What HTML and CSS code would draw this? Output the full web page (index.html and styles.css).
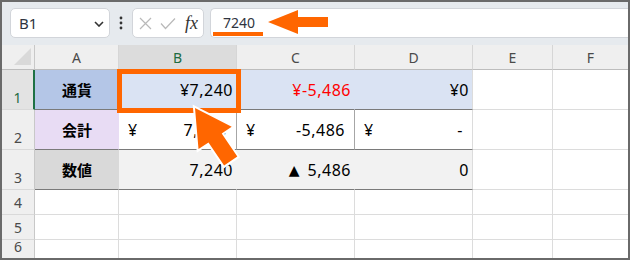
FILE: index.html
```html
<!DOCTYPE html>
<html lang="ja">
<head>
<meta charset="utf-8">
<link rel="stylesheet" href="styles.css">
</head>
<body>
<div class="frame">
  <div class="toolbar">
    <div class="namebox">
      <span class="nb-text">B1</span>
      <svg class="chev" width="10" height="6" viewBox="0 0 10 6"><polyline points="1,1 5,5 9,1" fill="none" stroke="#333" stroke-width="1.6"/></svg>
    </div>
    <div class="dots">
      <svg width="4" height="14" viewBox="0 0 4 14"><circle cx="2" cy="2" r="1.4" fill="#333"/><circle cx="2" cy="7" r="1.4" fill="#333"/><circle cx="2" cy="12" r="1.4" fill="#333"/></svg>
    </div>
    <div class="fxbox">
      <svg class="ico" width="13" height="13" viewBox="0 0 13 13"><path d="M1 1 L12 12 M12 1 L1 12" stroke="#b9b9b9" stroke-width="1.2" fill="none"/></svg>
      <svg class="ico" width="16" height="13" viewBox="0 0 16 13"><polyline points="1,6.5 5.5,11.5 15,1.5" stroke="#b9b9b9" stroke-width="1.2" fill="none"/></svg>
      <span class="fx">fx</span>
    </div>
    <div class="formula"><span class="ftext">7240</span></div>
  </div>

  <div class="sheet">
    <div class="corner"><svg width="18" height="18" viewBox="0 0 18 18"><polygon points="17,0 17,17 0,17" fill="#d9d9d9"/></svg></div>
    <div class="ch">A</div>
    <div class="ch sel">B</div>
    <div class="ch">C</div>
    <div class="ch">D</div>
    <div class="ch">E</div>
    <div class="ch last">F</div>

    <div class="rh sel">1</div>
    <div class="c lbl hd1">通貨</div>
    <div class="c num r1">¥7,240</div>
    <div class="c num r1 red">¥-5,486</div>
    <div class="c num r1 end">¥0</div>
    <div class="c"></div>
    <div class="c last"></div>

    <div class="rh">2</div>
    <div class="c lbl hd2">会計</div>
    <div class="c acct r2"><span>¥</span><span>7,240</span></div>
    <div class="c acct r2"><span>¥</span><span>-5,486</span></div>
    <div class="c acct r2 end"><span>¥</span><span>-</span></div>
    <div class="c"></div>
    <div class="c last"></div>

    <div class="rh">3</div>
    <div class="c lbl hd3">数値</div>
    <div class="c num r3">7,240</div>
    <div class="c num r3"><span class="tri">▲</span>&nbsp;5,486</div>
    <div class="c num r3 end">0</div>
    <div class="c"></div>
    <div class="c last"></div>

    <div class="rh">4</div>
    <div class="c"></div><div class="c"></div><div class="c"></div><div class="c"></div><div class="c"></div><div class="c last"></div>
    <div class="rh">5</div>
    <div class="c"></div><div class="c"></div><div class="c"></div><div class="c"></div><div class="c"></div><div class="c last"></div>
    <div class="rh bottom">6</div>
    <div class="c bottom"></div><div class="c bottom"></div><div class="c bottom"></div><div class="c bottom"></div><div class="c bottom"></div><div class="c bottom last"></div>
  </div>

  <svg class="overlay" width="630" height="260" viewBox="0 0 630 260">
    <rect x="213" y="32" width="50" height="4" fill="#ff6600"/>
    <polygon points="268,22 298,10 298,17 328,17 328,27 298,27 298,34" fill="#ff6600"/>
    <rect x="119.5" y="71.5" width="119" height="39" fill="none" stroke="#ff6600" stroke-width="5"/>
    <polygon points="195,108 231.7,126.7 221.7,133.4 237.3,156.6 224.1,165.6 208.5,142.4 198.5,149.1" fill="#ff6600" stroke="#ffffff" stroke-width="4" stroke-linejoin="miter" paint-order="stroke"/>
  </svg>
</div>
</body>
</html>
```

FILE: styles.css
```css
* { box-sizing: border-box; }
html, body { margin: 0; padding: 0; background: #ffffff; }

.frame {
  position: relative;
  width: 630px;
  height: 260px;
  border: 2px solid #6a6a6a;
  overflow: hidden;
  font-family: "Noto Sans CJK JP", "Noto Sans", sans-serif;
}

.toolbar {
  height: 43px;
  background: #e6eaee;
  display: flex;
  align-items: flex-start;
  padding: 6px 0 0 8px;
}

.namebox {
  width: 100px;
  height: 30px;
  background: #fff;
  border: 1px solid #d2d5da;
  border-radius: 5px;
  display: flex;
  align-items: center;
  justify-content: space-between;
  padding: 0 5px 0 8px;
}
.nb-text {
  font-family: "Noto Sans", sans-serif;
  font-size: 15px;
  color: #2f3440;
}
.chev { margin-top: 1px; }

.dots {
  width: 22px;
  height: 30px;
  display: flex;
  align-items: center;
  justify-content: center;
}

.fxbox {
  width: 72px;
  height: 30px;
  background: #fff;
  border: 1px solid #d2d5da;
  border-radius: 5px;
  display: flex;
  align-items: center;
  padding-left: 6px;
  gap: 8px;
}
.fx {
  font-family: "Liberation Serif", "DejaVu Serif", serif;
  font-style: italic;
  font-size: 18px;
  color: #333;
  margin-left: 1px;
  line-height: 1;
}

.formula {
  flex: 1;
  height: 30px;
  margin-left: 6px;
  background: #fff;
  border: 1px solid #d2d5da;
  border-right: none;
  border-radius: 5px 0 0 5px;
  display: flex;
  align-items: center;
  padding-left: 12px;
}
.ftext {
  font-family: "Noto Sans", sans-serif;
  font-size: 14px;
  color: #2f3440;
  margin-top: -2px;
}

.sheet {
  display: grid;
  grid-template-columns: 33px 84px 118px 118px 118px 80px 75px;
  grid-template-rows: 25px 40px 40px 40px 25px 25px 18px;
}

.corner {
  background: #efefef;
  border-right: 1px solid #c8c8c8;
  border-bottom: 1px solid #bdbdbd;
  display: flex;
  align-items: flex-end;
  justify-content: flex-end;
  padding: 0 2px 3px 0;
}

.ch {
  background: #efefef;
  border-right: 1px solid #d6d6d6;
  border-bottom: 1px solid #bdbdbd;
  display: flex;
  align-items: center;
  justify-content: center;
  font-family: "Noto Sans", sans-serif;
  font-size: 14px;
  color: #4a4a4a;
}
.ch.sel { background: #dcdcdc; color: #1d6b41; }
.ch.last { border-right: none; }

.rh {
  background: #efefef;
  border-right: 1px solid #c8c8c8;
  border-bottom: 1px solid #d9d9d9;
  display: flex;
  align-items: flex-end;
  justify-content: center;
  padding-bottom: 2px;
  font-family: "Noto Sans", sans-serif;
  font-size: 14px;
  color: #4a4a4a;
}
.rh.sel { background: #e3e3e3; color: #1d6b41; border-right: 2px solid #1e7145; }
.rh.bottom { border-bottom: none; }

.c {
  background: #fff;
  border-right: 1px solid #dcdcdc;
  border-bottom: 1px solid #dcdcdc;
  display: flex;
  align-items: center;
  font-family: "Noto Sans", "Noto Sans CJK JP", sans-serif;
  font-size: 16px;
  letter-spacing: 0.5px;
  color: #000;
  padding: 0 3px 0 4px;
  white-space: nowrap;
}
.c.last { border-right: none; }
.c.bottom { border-bottom: none; }

.num { justify-content: flex-end; }
.lbl {
  justify-content: center;
  font-family: "Noto Sans CJK JP", sans-serif;
  font-size: 15px;
  letter-spacing: 0;
  font-weight: bold;
}
.acct { justify-content: space-between; padding: 0 9px 0 9px; }
.red { color: #ff0000; }
.tri { font-size: 14px; font-family: "DejaVu Sans", sans-serif; margin-right: 3px; }

.hd1 { background: #b4c6e7; border-right-color: #b4c6e7; border-bottom-color: #7a7a7a; }
.hd2 { background: #e8dcf4; border-right-color: #e8dcf4; border-bottom-color: #7a7a7a; }
.hd3 { background: #d9d9d9; border-right-color: #d9d9d9; border-bottom-color: #7a7a7a; }

.r1 { background: #dae3f3; border-right-color: #dae3f3; border-bottom-color: #7a7a7a; }
.r2 { border-right-color: #a6a6a6; border-bottom-color: #7a7a7a; }
.r3 { background: #f2f2f2; border-right-color: #f2f2f2; border-bottom-color: #7a7a7a; }
.c.end { border-right-color: #dcdcdc; }

.overlay {
  position: absolute;
  left: -2px;
  top: -2px;
  pointer-events: none;
}
```
